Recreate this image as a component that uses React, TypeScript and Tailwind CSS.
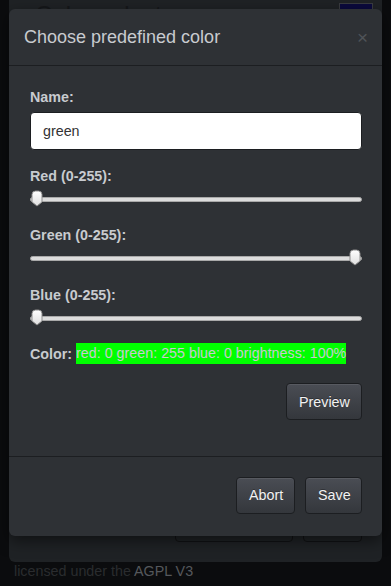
import type { ReactNode } from 'react'

const font = "font-['Liberation_Sans','Helvetica_Neue',Arial,sans-serif]"

const sliders = [
  { label: 'Red (0-255):', value: 0, gap: 'mt-[16px]' },
  { label: 'Green (0-255):', value: 255, gap: 'mt-[17px]' },
  { label: 'Blue (0-255):', value: 0, gap: 'mt-[18px]' },
]

function Thumb() {
  return (
    <svg width="12" height="17" viewBox="0 0 12 17" className="block">
      <defs>
        <linearGradient id="thumbFill" x1="0" y1="0" x2="0" y2="1">
          <stop offset="0" stopColor="#ffffff" />
          <stop offset="1" stopColor="#dedede" />
        </linearGradient>
      </defs>
      <path
        d="M1 4.5 Q1 1 4.5 1 H7.5 Q11 1 11 4.5 V12 L6 16 L1 12 Z"
        fill="url(#thumbFill)"
        stroke="#8c8c8c"
        strokeWidth="1"
      />
    </svg>
  )
}

function Slider({ value }: { value: number }) {
  const pct = value / 255
  return (
    <div className="relative h-[18px] w-full">
      <div className="absolute left-0 right-0 top-[7px] h-[5px] rounded-full border border-[#a9a9a9] bg-[#dcdcdc]" />
      <div
        className="absolute top-[0px]"
        style={{ left: `calc(${pct} * (100% - 14px) + 1px)` }}
      >
        <Thumb />
      </div>
    </div>
  )
}

function Button({ children, className = '' }: { children: ReactNode; className?: string }) {
  return (
    <button
      type="button"
      className={`h-[37px] rounded-[4px] border border-[#1c1e21] bg-gradient-to-b from-[#4a4d54] to-[#34373c] px-[12px] text-[14.3px] text-[#f2f2f2] shadow-[inset_0_1px_0_rgba(255,255,255,0.08)] [text-shadow:0_-1px_0_rgba(0,0,0,0.3)] ${className}`}
    >
      {children}
    </button>
  )
}

export default function App() {
  return (
    <div className={`relative h-[586px] w-[391px] overflow-hidden bg-[#0b0c0e] ${font}`}>
      {/* page underneath the backdrop */}
      <div className="px-[9px]">
        <div className="relative h-[562px] rounded-b-[6px] bg-[#1f2225]">
          <div className="absolute left-[26px] top-[1px] text-[24px] leading-[28px] text-[#15171a]">Color selector</div>
          <div className="absolute right-[9px] top-[3px] h-[10px] w-[34px] border border-[#3a3c40] bg-[#0b0a3d]" />
          <div className="absolute bottom-[20px] right-[20px] flex gap-[10px]">
            <div className="h-[37px] w-[118px] rounded-[4px] border border-[#111214]" />
            <div className="h-[37px] w-[59px] rounded-[4px] border border-[#111214]" />
          </div>
        </div>
        <p className="ml-[5px] mt-[-1px] text-[14.3px] leading-[20px] text-[#2a2c2f]">
          licensed under the <span className="text-[#55585c]">AGPL V3</span>
        </p>
      </div>

      {/* modal */}
      <div className="absolute left-[9px] top-[9px] w-[373px] rounded-[6px] bg-[#2e3135] shadow-[0_5px_15px_rgba(0,0,0,0.5)]">
        <div className="flex h-[57px] items-center justify-between border-b border-[#1c1e21] pl-[15px] pr-[14px]">
          <h4 className="text-[18px] text-[#c8cbcf]">Choose predefined color</h4>
          <span className="text-[19px] leading-none text-[#4f5358]">×</span>
        </div>

        <div className="pb-[36px] pl-[21px] pr-[20px] pt-[21px] text-[14.3px] leading-[20px] text-[#c8cbcf]">
          <label className="block font-bold">Name:</label>
          <input
            readOnly
            value="green"
            className="mt-[5px] block h-[38px] w-full rounded-[4px] border border-[#1c1e21] bg-white px-[12px] text-[14.3px] text-[#333] outline-none"
          />

          {sliders.map((s) => (
            <div key={s.label} className={s.gap}>
              <label className="block font-bold">{s.label}</label>
              <div className="mt-[4px]">
                <Slider value={s.value} />
              </div>
            </div>
          ))}

          <div className="mt-[16px] flex items-center">
            <span className="font-bold">Color:</span>
            <span className="ml-[4px] bg-[#00ff00] leading-[21px] text-[#c8cbcf]">
              red: 0 green: 255 blue: 0 brightness: 100%
            </span>
          </div>

          <div className="mt-[19px] flex justify-end">
            <Button className="w-[76px]">Preview</Button>
          </div>
        </div>

        <div className="flex justify-end gap-[10px] border-t border-[#1c1e21] px-[20px] pb-[22px] pt-[20px]">
          <Button className="w-[59px]">Abort</Button>
          <Button className="w-[57px]">Save</Button>
        </div>
      </div>
    </div>
  )
}
